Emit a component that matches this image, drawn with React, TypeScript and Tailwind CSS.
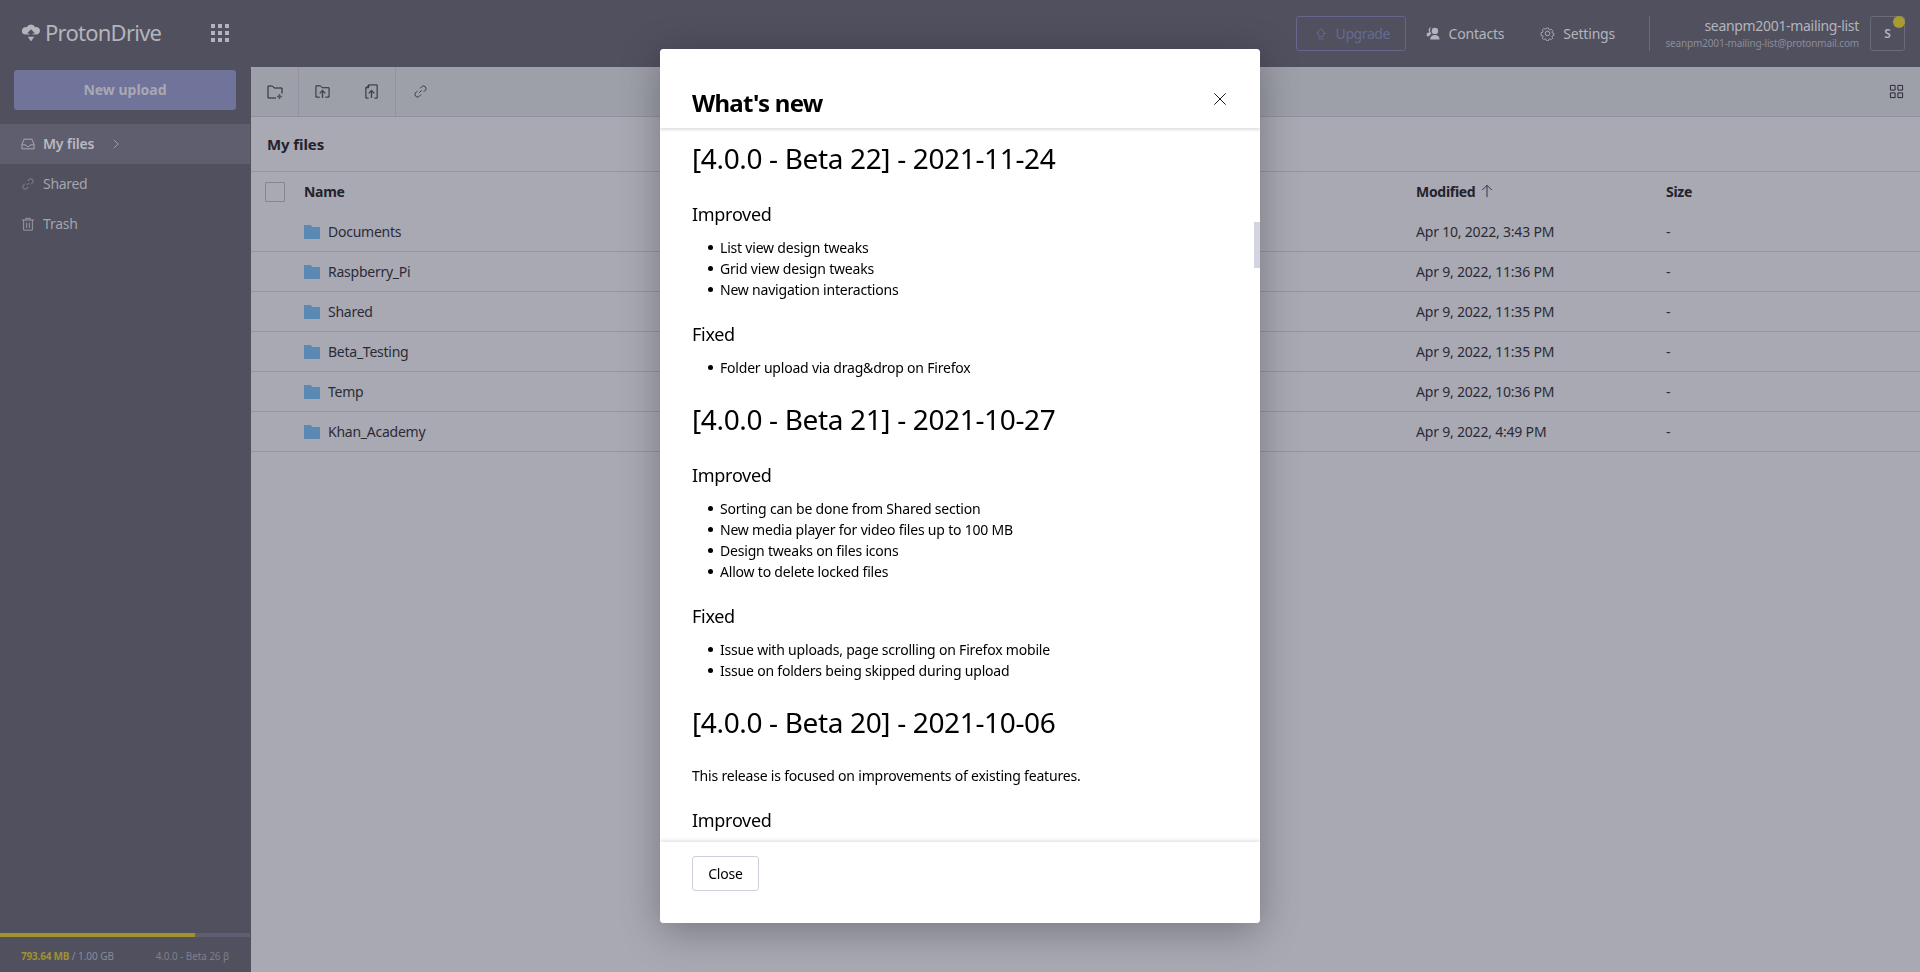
import React from 'react'

const files = [
  { name: 'Documents', modified: 'Apr 10, 2022, 3:43 PM' },
  { name: 'Raspberry_Pi', modified: 'Apr 9, 2022, 11:36 PM' },
  { name: 'Shared', modified: 'Apr 9, 2022, 11:35 PM' },
  { name: 'Beta_Testing', modified: 'Apr 9, 2022, 11:35 PM' },
  { name: 'Temp', modified: 'Apr 9, 2022, 10:36 PM' },
  { name: 'Khan_Academy', modified: 'Apr 9, 2022, 4:49 PM' },
]

function Icon({ children, className = '' }: { children: React.ReactNode; className?: string }) {
  return (
    <svg viewBox="0 0 16 16" fill="none" stroke="currentColor" strokeWidth="1" className={className}>
      {children}
    </svg>
  )
}

function LinkIcon({ className }: { className?: string }) {
  return (
    <Icon className={className}>
      <path d="M6.8 9.2 9.2 6.8M7.6 4.6l1.7-1.7a2.6 2.6 0 0 1 3.8 3.8l-1.7 1.7M8.4 11.4l-1.7 1.7a2.6 2.6 0 0 1-3.8-3.8l1.7-1.7" />
    </Icon>
  )
}

function Logo() {
  return (
    <svg viewBox="0 0 18 18" className="w-[18px] h-[18px] text-[#b4b4bc]" fill="currentColor">
      <path d="M9 .5a4.800 4.800 0 0 1 4.300 2.700A3.700 3.700 0 0 1 18 6.800c0 2-1.600 3.700-3.600 3.700H3.600A3.600 3.600 0 0 1 0 6.800a3.700 3.700 0 0 1 4.700-3.600A4.800 4.800 0 0 1 9 .5Z" />
      <path d="M9 5.200 5 9.400h2.400v2.800h3.200V9.400H13Z" fill="#50505f" />
      <path d="M5.800 12.800h6.400L9 17.500Z" />
    </svg>
  )
}

function AppsIcon() {
  return (
    <div className="grid grid-cols-3 gap-[3px] w-[18px]">
      {Array.from({ length: 9 }).map((_, i) => (
        <span key={i} className="w-1 h-1 bg-[#b4b4bc]" />
      ))}
    </div>
  )
}

function Header() {
  return (
    <header className="h-[67px] shrink-0 flex items-center">
      <div className="w-[251px] shrink-0 flex items-center pl-[22px] -mt-[2px]">
        <Logo />
        <span className="ml-[5px] text-[22px] text-[#b4b4bc] tracking-[-0.75px] leading-none -mt-[1px]">ProtonDrive</span>
        <span className="ml-[50px] mt-[1px]">
          <AppsIcon />
        </span>
      </div>
      <div className="flex-1 flex items-center justify-end pr-[15px] text-sm">
        <div className="w-[110px] h-[35px] flex items-center pl-[17px] gap-[8px] border border-[#64668c] rounded-[3px] text-[#686a8f] mr-5">
          <Icon className="w-[14px] h-[14px]">
            <path d="M8 2 2.800 7.600h2.700v3.400h5V7.600h2.700ZM4.500 13.500h7" />
          </Icon>
          <span className="tracking-[-0.4px]">Upgrade</span>
        </div>
        <div className="flex items-center gap-[8px] text-[#b4b4bc] mr-[36px]">
          <svg viewBox="0 0 16 16" className="w-[15px] h-[15px]" fill="currentColor">
            <circle cx="9.500" cy="5.200" r="3.400" />
            <path d="M4.500 14.500c0-3.400 2-5 5-5s5 1.600 5 5ZM5.400 1.400a3 3 0 0 0-1.600 5.200l-3 1.200v3.200H3.500c.4-1.400 1.200-2.400 2.400-3.100A4.600 4.600 0 0 1 5.400 1.400Z" />
          </svg>
          <span className="tracking-[-0.2px]">Contacts</span>
        </div>
        <div className="flex items-center gap-[8px] text-[#b4b4bc] mr-[34px]">
          <Icon className="w-[15px] h-[15px]">
            <circle cx="8" cy="8" r="2.400" />
            <path d="M6.800 1.500h2.400l.4 1.800 1.300.6 1.600-1 1.700 1.700-1 1.600.6 1.300 1.800.4v2.400l-1.800.4-.6 1.300 1 1.600-1.700 1.700-1.600-1-1.300.6-.4 1.800H6.800l-.4-1.800-1.300-.6-1.600 1-1.700-1.700 1-1.600-.6-1.300-1.800-.4V7l1.800-.4.6-1.300-1-1.600 1.700-1.700 1.600 1 1.300-.6Z" transform="translate(.8 .8) scale(.9)" />
          </Icon>
          <span className="tracking-[-0.2px]">Settings</span>
        </div>
        <div className="w-px h-[35px] bg-[#6b6b7a] mr-[21px]" />
        <div className="w-[188px] flex flex-col items-end mr-[11px] whitespace-nowrap">
          <span className="text-sm leading-[19px] text-[#b4b4bc] tracking-[-0.32px] -mt-[2px]">seanpm2001-mailing-list</span>
          <span className="text-[10px] leading-[14px] text-[#8c8c98] tracking-[-0.16px] mt-[1px]">seanpm2001-mailing-list@protonmail.com</span>
        </div>
        <div className="relative w-[35px] h-[35px] border border-[#6b6b7a] rounded-[3px] flex items-center justify-center text-xs font-semibold text-[#b4b4bc]">
          S
          <span className="absolute -top-[1px] -right-[1px] w-3 h-3 rounded-full bg-[#a99a34]" />
        </div>
      </div>
    </header>
  )
}

function Sidebar() {
  return (
    <aside className="w-[251px] shrink-0 flex flex-col text-sm">
      <div className="pl-[14px] pr-[15px] pt-[3px]">
        <div className="h-10 rounded-[3px] bg-[#70739a] flex items-center justify-center font-bold text-[#a9a9b3]">
          New upload
        </div>
      </div>
      <nav className="mt-[14px] mr-px flex flex-col">
        <div className="h-10 flex items-center pl-[21px] bg-[#5e5e6e] text-[#b9b9c1] font-semibold">
          <Icon className="w-[14px] h-[14px] text-[#b4b4bc]">
            <path d="M1 9 3.500 2.500h9L15 9v4.500H1ZM1 9h4.500c.5 1.500 1.200 2 2.500 2s2-.5 2.500-2H15" />
          </Icon>
          <span className="ml-2 tracking-[-0.15px]">My files</span>
          <Icon className="w-3 h-3 ml-[16px] text-[#b4b4bc]">
            <path d="M5 2.500 11 8l-6 5.500" />
          </Icon>
        </div>
        <div className="h-10 flex items-center pl-[21px] text-[#a4a4ad]">
          <LinkIcon className="w-[14px] h-[14px] text-[#8f8f9a]" />
          <span className="ml-2 tracking-[-0.3px]">Shared</span>
        </div>
        <div className="h-10 flex items-center pl-[21px] text-[#a4a4ad]">
          <Icon className="w-[14px] h-[14px] text-[#a4a4ad]">
            <path d="M1 3.500h14M5.500 3.500v-2h5v2M3 3.500V15h10V3.500M6.500 6.500v6M9.500 6.500v6" />
          </Icon>
          <span className="ml-2 tracking-[-0.2px]">Trash</span>
        </div>
      </nav>
      <div className="mt-auto">
        <div className="h-1 mr-px bg-[#5e5e72]">
          <div className="h-full w-[195px] bg-[#a1912f]" />
        </div>
        <div className="h-[35px] pt-[3px] pl-[21px] pr-[22px] flex items-center justify-between text-[10px] whitespace-nowrap">
          <span className="text-[#8c8c98] tracking-[-0.05px]">
            <span className="font-bold text-[#a1912f] tracking-[-0.2px]">793.64 MB</span> / 1.00 GB
          </span>
          <span className="text-[#7f7f8c] tracking-[-0.1px]">4.0.0 - Beta 26 β</span>
        </div>
      </div>
    </aside>
  )
}

function FolderIcon() {
  return (
    <svg viewBox="0 0 16 14" className="w-4 h-[14px]" fill="#5a8ab3">
      <path d="M0 0h6.500l2 2H16v12H0Z" />
    </svg>
  )
}

function Toolbar() {
  return (
    <div className="h-[50px] shrink-0 flex items-stretch bg-[#9d9fa9] border-b border-[#90919f] rounded-tl-[4px] text-[#23232d]">
      <div className="w-[48px] flex items-center justify-center border-r border-[#92939f]">
        <Icon className="w-4 h-4">
          <path d="M15 9.500V4H7L5.500 2H1v12h8" />
          <path d="M12.500 10v5M10 12.500h5" stroke="#55555f" strokeWidth="1.500" />
        </Icon>
      </div>
      <div className="w-[97px] flex items-center justify-center gap-[34px] border-r border-[#92939f]">
        <Icon className="w-[15px] h-[15px]">
          <path d="M5 14H1V2h5l1.500 2H15v10h-4" />
          <path d="M8 15V7.500M5 10l3-3 3 3" stroke="#44444e" strokeWidth="1.500" />
        </Icon>
        <Icon className="w-[15px] h-[15px]">
          <path d="M5 15H2V4l3-3h9v14h-3M5 1v3H2" />
          <path d="M8 15V7.500M5 10l3-3 3 3" stroke="#44444e" strokeWidth="1.500" />
        </Icon>
      </div>
      <div className="w-[48px] flex items-center justify-center">
        <LinkIcon className="w-[15px] h-[15px] text-[#33333d]" />
      </div>
      <div className="ml-auto mr-4 flex items-center">
        <Icon className="w-[15px] h-[15px]">
          <path d="M1.500 1.500h5v5h-5ZM9.500 1.500h5v5h-5ZM1.500 9.500h5v5h-5ZM9.500 9.500h5v5h-5Z" />
        </Icon>
      </div>
    </div>
  )
}

function FileList() {
  return (
    <main className="flex-1 flex flex-col min-w-0 bg-[#a9a9b3] text-[#2b2b36] text-sm">
      <Toolbar />
      <div className="h-[55px] shrink-0 flex items-center pl-4 pt-[2px] border-b border-[#95959f] text-[15px] font-bold text-[#23232d] tracking-[-0.1px]">
        My files
      </div>
      <div className="h-10 shrink-0 flex items-center font-bold text-[#23232d]">
        <span className="w-5 h-5 ml-[14px] border border-[#85858f] rounded-[1px]" />
        <span className="ml-[19px] w-[1112px] tracking-[-0.3px]">Name</span>
        <span className="w-[250px] flex items-center gap-[5px] tracking-[-0.3px]">
          Modified
          <Icon className="w-[14px] h-[14px] -mt-[2px]">
            <path d="M8 15V1.500M2.500 7 8 1.500 13.500 7" />
          </Icon>
        </span>
        <span className="tracking-[-0.3px]">Size</span>
      </div>
      {files.map((file) => (
        <div key={file.name} className="h-10 shrink-0 flex items-center border-b border-[#95959f]">
          <span className="ml-[53px]">
            <FolderIcon />
          </span>
          <span className="ml-[8px] w-[1088px] tracking-[-0.25px]">{file.name}</span>
          <span className="w-[250px] tracking-[-0.2px]">{file.modified}</span>
          <span>-</span>
        </div>
      ))}
    </main>
  )
}

function Release({ title, intro, sections }: { title: string; intro?: string; sections: { label: string; items: string[] }[] }) {
  return (
    <section>
      <h1 className="text-[28px] leading-[32px] mt-[25px] tracking-[-0.35px]">{title}</h1>
      {intro && <p className="text-sm leading-[21px] mt-[27px] tracking-[-0.2px]">{intro}</p>}
      {sections.map((s, i) => (
        <div key={i}>
          <h2 className={`text-lg leading-6 tracking-[-0.3px] ${intro ? 'mt-[22px]' : i === 0 ? 'mt-[28px]' : 'mt-[22px]'}`}>{s.label}</h2>
          {s.items.length > 0 && (
            <ul className="mt-[11px] pl-4 text-sm leading-[21px] tracking-[-0.2px]">
              {s.items.map((item) => (
                <li key={item} className="flex items-center">
                  <span className="w-[5px] h-[5px] mr-[7px] rounded-full bg-black" />
                  {item}
                </li>
              ))}
            </ul>
          )}
        </div>
      ))}
    </section>
  )
}

function WhatsNewModal() {
  return (
    <div className="fixed inset-0 flex items-start justify-center pt-[49px]">
      <div className="relative w-[600px] h-[874px] bg-white rounded-[4px] flex flex-col overflow-hidden shadow-[0_8px_40px_rgba(0,0,0,0.3)] text-black">
        <div className="relative z-10 h-[79px] shrink-0 px-8 flex items-start justify-between bg-white shadow-[0_2px_3px_rgba(0,0,0,0.13)]">
          <h1 className="mt-[36px] text-2xl leading-9 font-bold tracking-[-0.75px]">What's new</h1>
          <Icon className="w-[14px] h-[14px] mt-[43px] mr-[1px]">
            <path d="M1.500 1.500l13 13M14.500 1.500l-13 13" />
          </Icon>
        </div>
        <div className="flex-1 min-h-0 overflow-hidden px-8 -mt-[11px]">
          <Release
            title="[4.0.0 - Beta 22] - 2021-11-24"
            sections={[
              { label: 'Improved', items: ['List view design tweaks', 'Grid view design tweaks', 'New navigation interactions'] },
              { label: 'Fixed', items: ['Folder upload via drag&drop on Firefox'] },
            ]}
          />
          <Release
            title="[4.0.0 - Beta 21] - 2021-10-27"
            sections={[
              {
                label: 'Improved',
                items: ['Sorting can be done from Shared section', 'New media player for video files up to 100 MB', 'Design tweaks on files icons', 'Allow to delete locked files'],
              },
              { label: 'Fixed', items: ['Issue with uploads, page scrolling on Firefox mobile', 'Issue on folders being skipped during upload'] },
            ]}
          />
          <Release
            title="[4.0.0 - Beta 20] - 2021-10-06"
            intro="This release is focused on improvements of existing features."
            sections={[{ label: 'Improved', items: [] }]}
          />
        </div>
        <div className="relative z-10 h-[81px] shrink-0 px-8 pt-[14px] bg-white shadow-[0_-2px_3px_rgba(0,0,0,0.1)]">
          <button className="w-[67px] h-[35px] border border-[#d0d0dc] rounded-[3px] text-sm tracking-[-0.2px]">Close</button>
        </div>
        <div className="absolute right-0 top-[173px] w-[6px] h-[46px] bg-[#d2d4e2]" />
      </div>
    </div>
  )
}

export default function App() {
  return (
    <div className="h-[972px] flex flex-col bg-[#50505f] overflow-hidden font-['Noto_Sans','Open_Sans',sans-serif]">
      <Header />
      <div className="flex-1 flex min-h-0">
        <Sidebar />
        <FileList />
      </div>
      <WhatsNewModal />
    </div>
  )
}
